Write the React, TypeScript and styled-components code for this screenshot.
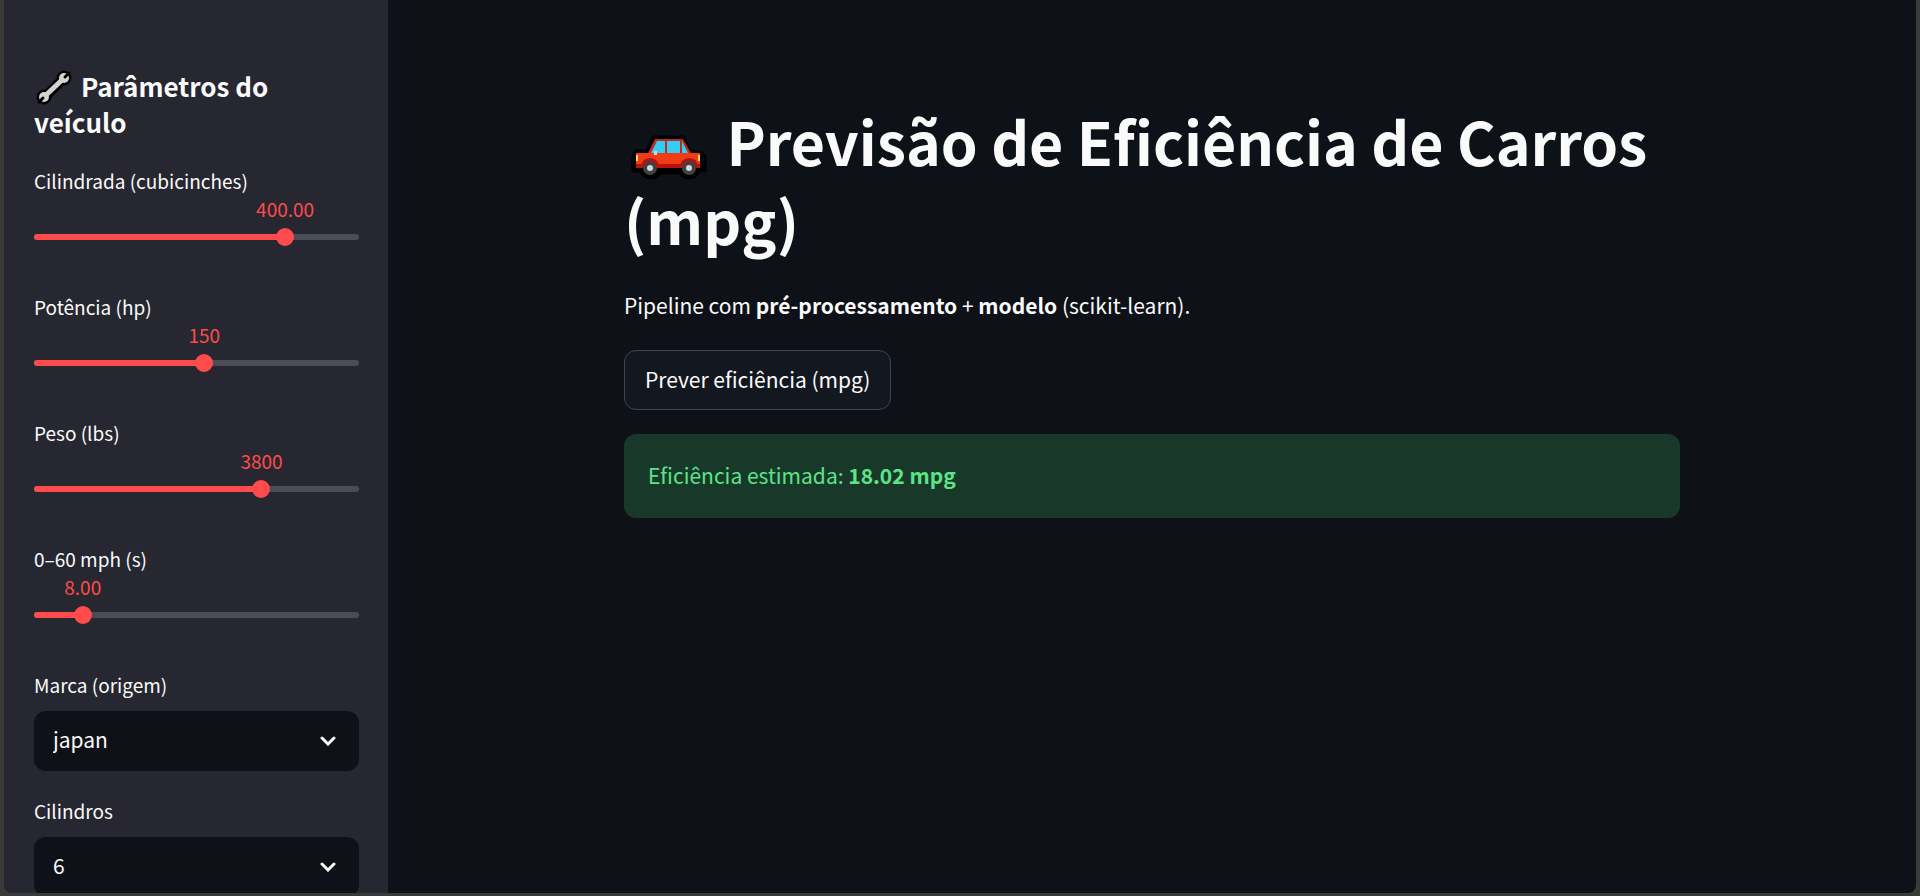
import React, { useId, useState } from "react";
import styled, { createGlobalStyle } from "styled-components";

const GlobalStyle = createGlobalStyle`
  *, *::before, *::after { box-sizing: border-box; }
  body {
    margin: 0;
    background: #3b3a3a;
    color: #fafafa;
    font-family: "Noto Sans CJK SC", "Open Sans", sans-serif;
    font-size: 21px;
  }
`;

const Frame = styled.div`
  height: 100vh;
  padding: 0 4px 3px;
`;

const Shell = styled.div`
  display: flex;
  height: 100%;
  overflow: hidden;
  border-radius: 0 0 8px 8px;
  background: #0e1117;
`;

const Sidebar = styled.aside`
  flex: 0 0 384px;
  display: flex;
  flex-direction: column;
  gap: 24px;
  padding: 68px 29px 0 30px;
  overflow: hidden;
  background: #262730;
`;

const SidebarTitle = styled.h2`
  margin: 0;
  padding-bottom: 1px;
  font-size: 26px;
  font-weight: 600;
  line-height: 36px;
`;

const Field = styled.div`
  display: flex;
  flex: none;
  flex-direction: column;
  gap: 6px;
`;

const FieldLabel = styled.label`
  height: 36px;
  font-size: 19px;
  line-height: 32px;
`;

const SliderBody = styled.div`
  position: relative;
  display: flex;
  align-items: center;
  height: 60px;
`;

const Rail = styled.div`
  width: 100%;
  height: 6px;
  border-radius: 3px;
  overflow: hidden;
  background: #4b4c55;
`;

const RailFill = styled.div`
  height: 100%;
  background: #ff4b4b;
`;

const SliderValue = styled.output`
  position: absolute;
  top: -14px;
  transform: translateX(-50%);
  color: #ff4b4b;
  font-size: 19px;
  line-height: 32px;
`;

const RangeInput = styled.input`
  position: absolute;
  left: -9px;
  width: calc(100% + 18px);
  height: 18px;
  margin: 0;
  appearance: none;
  background: transparent;
  cursor: pointer;

  &::-webkit-slider-thumb {
    appearance: none;
    width: 18px;
    height: 18px;
    border: 0;
    border-radius: 50%;
    background: #ff4b4b;
  }
`;

const SelectBody = styled.div`
  position: relative;
  display: flex;
  align-items: center;
`;

const SelectInput = styled.select`
  width: 100%;
  height: 60px;
  padding: 0 60px 4px 19px;
  appearance: none;
  border: 0;
  border-radius: 12px;
  background: #0e1117;
  color: inherit;
  font-family: inherit;
  font-size: 21px;
`;

const SelectArrow = styled.svg`
  position: absolute;
  right: 23px;
  width: 16px;
  height: 10px;
  pointer-events: none;
`;

const Main = styled.main`
  flex: 1;
  min-width: 0;
  padding: 101px 24px 0;
`;

const Content = styled.div`
  display: flex;
  flex-direction: column;
  align-items: flex-start;
  gap: 24px;
  max-width: 1056px;
  margin: 0 auto;
`;

const Title = styled.h1`
  margin: 0;
  padding-bottom: 1px;
  font-size: 59px;
  font-weight: 700;
  line-height: 79px;
`;

const Paragraph = styled.p`
  margin: 0;
  padding: 2px 0;
  line-height: 38px;
`;

const Strong = styled.strong`
  font-weight: 600;
`;

const Button = styled.button`
  height: 60px;
  padding: 0 20px 2px;
  border: 1px solid #41444c;
  border-radius: 12px;
  background: #131720;
  color: inherit;
  font-family: inherit;
  font-size: 21px;
`;

const Alert = styled.div`
  width: 100%;
  padding: 22px 24px 24px;
  border-radius: 12px;
  background: #183929;
  color: #5ce488;
  line-height: 38px;
`;

const WrenchDrawing = styled.svg`
  width: 41px;
  height: 36px;
  margin: -4px 0;
  vertical-align: -4px;
`;

const CarDrawing = styled.svg`
  width: 89px;
  height: 48px;
  margin: -4px 0;
  vertical-align: -11px;
`;

function Wrench() {
  return (
    <WrenchDrawing viewBox="0 0 41 36" aria-hidden="true">
      <g stroke="#000" strokeLinecap="round" fill="#000">
        <path d="M11 28 L30 9" strokeWidth="10" />
        <circle cx="30" cy="9" r="7" />
        <circle cx="10" cy="28" r="7" />
      </g>
      <path d="M11 27 L29 10" stroke="#d3d3cf" strokeWidth="5" />
      <circle cx="30" cy="9" r="5" fill="#d3d3cf" />
      <circle cx="10" cy="28" r="5" fill="#d3d3cf" />
      <path d="M31 8 L35 4 M9 29 L5 33" stroke="#000" strokeWidth="3" strokeLinecap="round" />
    </WrenchDrawing>
  );
}

function Car() {
  return (
    <CarDrawing viewBox="0 0 89 48" aria-hidden="true">
      <path
        d="M22 17 L29 3 H60 L67 17 L78 19 L82 23 V39 H76 Q72 46 65 46 Q59 46 55 41 H37 Q34 46 27 46 Q19 46 16 39 H8 V23 L12 17 Z"
        fill="#000"
        stroke="#000"
        strokeWidth="1"
      />
      <path d="M24 20 L31 6 H59 L67 20 Z" fill="#b82d20" />
      <path d="M27 20 L33 8 H41 V20 Z M43 8 H56 V20 H43 Z M58 8 L64 20 H58 Z" fill="#35cdf5" />
      <path d="M12 20 H76 V35 H12 Z" fill="#ef3b16" />
      <path d="M12 31 H76 V35 H12 Z" fill="#b9120d" />
      <path d="M17 35 Q17 25 26 25 Q35 25 35 35 Z M56 35 Q56 25 65 25 Q74 25 74 35 Z" fill="#b9120d" />
      <path d="M12 22 H14 V28 H12 Z M74 22 H76 V28 H74 Z" fill="#ffd75a" />
      <path d="M30 18 H33 V22 H30 Z" fill="#d4d4d4" />
      <circle cx="26" cy="35" r="7" fill="#414141" />
      <circle cx="65" cy="35" r="7" fill="#414141" />
      <circle cx="26" cy="35" r="3" fill="#d6d6d6" />
      <circle cx="65" cy="35" r="3" fill="#d6d6d6" />
    </CarDrawing>
  );
}

type SliderProps = {
  label: string;
  min: number;
  max: number;
  step: number;
  initial: number;
  digits: number;
};

function Slider({ label, min, max, step, initial, digits }: SliderProps) {
  const id = useId();
  const [value, setValue] = useState(initial);
  const percent = `${((value - min) / (max - min)) * 100}%`;
  return (
    <Field>
      <FieldLabel htmlFor={id}>{label}</FieldLabel>
      <SliderBody>
        <SliderValue htmlFor={id} style={{ left: percent }}>
          {value.toFixed(digits)}
        </SliderValue>
        <Rail>
          <RailFill style={{ width: percent }} />
        </Rail>
        <RangeInput
          id={id}
          type="range"
          min={min}
          max={max}
          step={step}
          value={value}
          onChange={(event) => setValue(Number(event.target.value))}
        />
      </SliderBody>
    </Field>
  );
}

type SelectProps = { label: string; options: string[]; initial: string };

function Select({ label, options, initial }: SelectProps) {
  const id = useId();
  return (
    <Field>
      <FieldLabel htmlFor={id}>{label}</FieldLabel>
      <SelectBody>
        <SelectInput id={id} defaultValue={initial}>
          {options.map((option) => (
            <option key={option}>{option}</option>
          ))}
        </SelectInput>
        <SelectArrow viewBox="0 0 16 10" aria-hidden="true">
          <path
            d="M2 2 L8 8 L14 2"
            fill="none"
            stroke="#fafafa"
            strokeWidth="3"
            strokeLinecap="round"
          />
        </SelectArrow>
      </SelectBody>
    </Field>
  );
}

export default function App() {
  return (
    <Frame>
      <GlobalStyle />
      <Shell>
        <Sidebar>
          <SidebarTitle>
            <Wrench /> Parâmetros do veículo
          </SidebarTitle>
          <Slider label="Cilindrada (cubicinches)" min={60} max={500} step={1} initial={400} digits={2} />
          <Slider label="Potência (hp)" min={40} max={250} step={1} initial={150} digits={0} />
          <Slider label="Peso (lbs)" min={1000} max={5000} step={10} initial={3800} digits={0} />
          <Slider label="0–60 mph (s)" min={5} max={25} step={0.5} initial={8} digits={2} />
          <Select label="Marca (origem)" options={["europe", "japan", "usa"]} initial="japan" />
          <Select label="Cilindros" options={["3", "4", "5", "6", "8"]} initial="6" />
        </Sidebar>
        <Main>
          <Content>
            <Title>
              <Car /> Previsão de Eficiência de Carros (mpg)
            </Title>
            <Paragraph>
              Pipeline com <Strong>pré-processamento</Strong> + <Strong>modelo</Strong> (scikit-learn).
            </Paragraph>
            <Button type="button">Prever eficiência (mpg)</Button>
            <Alert role="status">
              Eficiência estimada: <Strong>18.02 mpg</Strong>
            </Alert>
          </Content>
        </Main>
      </Shell>
    </Frame>
  );
}
